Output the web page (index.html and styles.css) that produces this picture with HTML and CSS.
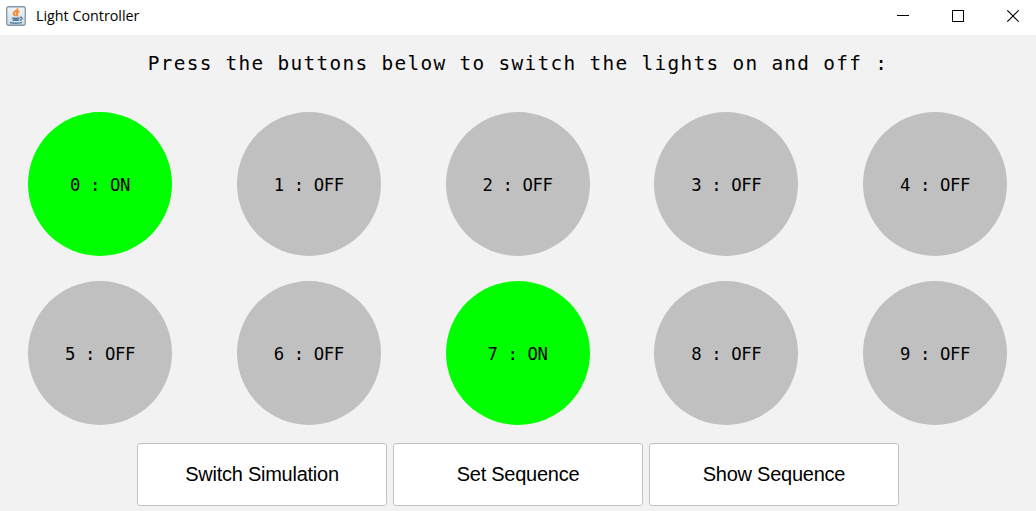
FILE: index.html
```html
<!DOCTYPE html>
<html lang="en">
<head>
<meta charset="utf-8">
<title>Light Controller</title>
<link rel="stylesheet" href="styles.css">
</head>
<body>
<header class="titlebar">
  <svg class="app-icon" width="20" height="20" viewBox="0 0 20 20">
    <defs><linearGradient id="tile" x1="0" y1="0" x2="0" y2="1"><stop offset="0" stop-color="#f4f6f8"/><stop offset="1" stop-color="#cfd9e2"/></linearGradient></defs>
    <rect x=".75" y=".75" width="18.5" height="18.5" rx="1.5" fill="url(#tile)" stroke="#8397a8" stroke-width="1.3"/>
    <path d="M11.300 2.500c1.200 2.300-4.600 3.200-3.600 5.400.4.800 1.200 1.300 1.600 2.200M13.400 5.300c-2.300.8-3.200 1.700-2.300 3 .5.800.2 1.400-.4 1.900" fill="none" stroke="#f58a30" stroke-width="2"/>
    <path d="M5.500 11.500h8v1.800c-1.500 1-5.500 1-7 0z" fill="#5580a0"/>
    <path d="M6.800 14.200h6M4 16.500c3 .8 9 .8 12-.2M13.700 11.300c3.100-.5 3.100 2.300.2 2.900" fill="none" stroke="#5580a0" stroke-width="1.400"/>
  </svg>
  <span class="app-title">Light Controller</span>
  <svg class="window-controls" width="122" height="12" viewBox="0 0 122 12" fill="none" stroke="#000">
    <path d="M0 5.500h12M55.500.5h11v11h-11z" shape-rendering="crispEdges"/>
    <path d="M110.300.3l11.400 11.400M121.700.3l-11.400 11.400" stroke-width="1.100"/>
  </svg>
</header>
<main class="content">
  <h1 class="heading">Press the buttons below to switch the lights on and off :</h1>
  <div class="lights">
    <button class="light on">0 : ON</button>
    <button class="light">1 : OFF</button>
    <button class="light">2 : OFF</button>
    <button class="light">3 : OFF</button>
    <button class="light">4 : OFF</button>
    <button class="light">5 : OFF</button>
    <button class="light">6 : OFF</button>
    <button class="light on">7 : ON</button>
    <button class="light">8 : OFF</button>
    <button class="light">9 : OFF</button>
  </div>
  <div class="actions">
    <button class="action">Switch Simulation</button>
    <button class="action">Set Sequence</button>
    <button class="action">Show Sequence</button>
  </div>
</main>
</body>
</html>
```

FILE: styles.css
```css
* { box-sizing: border-box; }
body {
  margin: 0;
  height: 511px;
  overflow: hidden;
  background: #f2f2f2;
  color: #000;
}
.titlebar {
  display: flex;
  align-items: center;
  height: 35px;
  padding: 0 17px 3px 6px;
  background: #fff;
}
.app-icon { flex: none; }
.app-title {
  margin-left: 10px;
  font: 14.3px/20px "Open Sans", "Noto Sans", sans-serif;
}
.window-controls { margin-left: auto; }
.content { display: flex; flex-direction: column; }
.heading {
  height: 77px;
  margin: 0;
  padding-top: 14px;
  font: 400 19.4px/30px "DejaVu Sans Mono", monospace;
  letter-spacing: 1.32px;
  text-align: center;
  white-space: pre;
}
.lights {
  display: grid;
  grid-template-columns: repeat(5, 144px);
  grid-auto-rows: 144px;
  justify-content: space-between;
  row-gap: 25px;
  padding: 0 29px 0 28px;
}
.light {
  padding: 1px 0 0;
  border: 0;
  border-radius: 50%;
  background: #c0c0c0;
  color: #000;
  font: 17.3px/20px "DejaVu Sans Mono", monospace;
  letter-spacing: -0.41px;
}
.light.on { background: #0f0; }
.actions {
  display: flex;
  justify-content: center;
  gap: 6px;
  padding-top: 18px;
}
.action {
  width: 250px;
  height: 63px;
  padding: 0 0 2px;
  border: 1px solid #c3c3c3;
  border-radius: 3px;
  background: #fff;
  color: #000;
  font: 20px/24px "Liberation Sans", Arial, sans-serif;
  letter-spacing: -0.25px;
}
```
